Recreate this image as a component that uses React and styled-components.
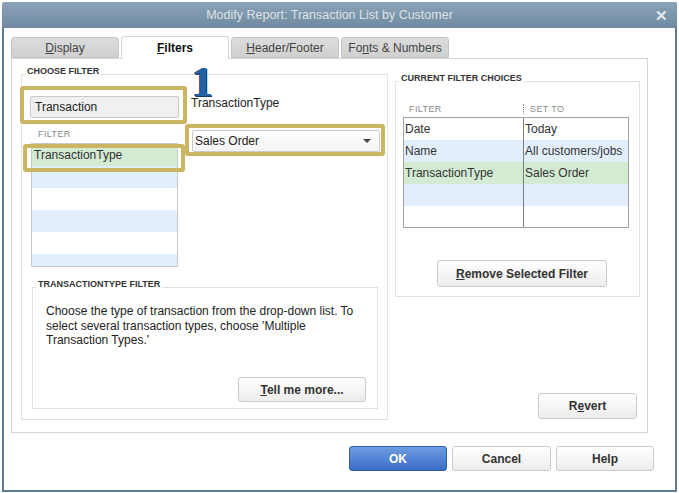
import React from 'react';
import styled, { createGlobalStyle } from 'styled-components';

const GlobalStyle = createGlobalStyle`
    body {
        margin: 0;
        background: #ffffff;
        font-family: "Liberation Sans", Arial, sans-serif;
        font-size: 12px;
        color: #222;
    }
`;

const Window = styled.div`
    box-sizing: border-box;
    margin: 2px 0 0 2px;
    width: 675px;
    height: 490px;
    border: 2px solid #5e7b92;
    border-top: none;
    border-radius: 3px 3px 0 0;
    background: #ffffff;
    display: flex;
    flex-direction: column;
`;

const TitleBar = styled.div`
    height: 26px;
    margin: 0 -2px;
    border-radius: 3px 3px 0 0;
    background: linear-gradient(#8ba3b7, #6f8aa1);
    display: flex;
    align-items: center;
    position: relative;
`;

const Title = styled.div`
    flex: 1;
    text-align: center;
    padding-right: 20px;
    color: #dde2e7;
    font-size: 12.5px;
`;

const CloseGlyph = styled.div`
    position: absolute;
    right: 9px;
    top: 5px;
    color: #e6e9ec;
    font-size: 15px;
    font-weight: bold;
`;

const Body = styled.div`
    flex: 1;
    padding: 8px 0 0 7px;
`;

const TabRow = styled.div`
    display: flex;
    gap: 2px;
    align-items: flex-end;
    height: 22px;
    position: relative;
    z-index: 1;
`;

const Tab = styled.div`
    box-sizing: border-box;
    width: 108px;
    height: ${p => (p.$active ? '23px' : '21px')};
    margin-bottom: ${p => (p.$active ? '-1px' : '0')};
    border: 1px solid ${p => (p.$active ? '#d4d4d4' : '#c6c6c6')};
    border-bottom: ${p => (p.$active ? 'none' : '1px solid #c6c6c6')};
    border-radius: 3px 3px 0 0;
    background: ${p => (p.$active ? '#ffffff' : 'linear-gradient(#dcdcdc, #d0d0d0)')};
    color: ${p => (p.$active ? '#111' : '#444')};
    font-weight: ${p => (p.$active ? 'bold' : 'normal')};
    font-size: 12px;
    display: flex;
    align-items: center;
    justify-content: center;
`;

const Mn = styled.span`
    text-decoration: underline;
`;

const Panel = styled.div`
    box-sizing: border-box;
    width: 637px;
    height: 375px;
    border: 1px solid #d6d6d6;
    padding: 15px 0 0 9px;
    display: flex;
    gap: 7px;
    align-items: flex-start;
    position: relative;
`;

const Group = styled.div`
    box-sizing: border-box;
    position: relative;
    width: ${p => p.$w}px;
    height: ${p => p.$h}px;
    border: 1px solid #e2e2e2;
    display: flex;
    flex-direction: column;
`;

const InnerGroup = styled(Group)`
    margin: 20px 0 0 10px;
`;

const GroupLabel = styled.span`
    position: absolute;
    top: -9px;
    left: 3px;
    padding: 0 2px;
    background: #ffffff;
    font-size: 9px;
    line-height: 11px;
    font-weight: bold;
    color: #333;
`;

const ChooseTop = styled.div`
    display: flex;
    padding: 21px 0 0 8px;
`;

const LeftCol = styled.div`
    width: 149px;
    display: flex;
    flex-direction: column;
`;

const SearchBox = styled.div`
    box-sizing: border-box;
    height: 22px;
    border: 1px solid #c9c9c9;
    border-radius: 2px;
    background: #f0f0f0;
    padding-left: 4px;
    display: flex;
    align-items: center;
    font-size: 12px;
    color: #222;
`;

const ColHead = styled.div`
    height: 14px;
    margin-top: 11px;
    padding-left: ${p => p.$pad || 0}px;
    font-size: 9px;
    letter-spacing: 0.4px;
    color: #8a8a8a;
    line-height: 10px;
`;

const ListBox = styled.div`
    box-sizing: border-box;
    margin-left: 1px;
    width: 147px;
    height: 124px;
    border: 1px solid #c8c8c8;
    overflow: hidden;
`;

const Row = styled.div`
    height: 22px;
    display: flex;
    align-items: center;
    background: ${p => (p.$tone === 'green' ? '#d3ebd3' : p.$tone === 'blue' ? '#e3eefc' : '#ffffff')};
    padding-left: ${p => (p.$cells ? 0 : 2)}px;
    font-size: 12px;
    color: #333;
`;

const RightCol = styled.div`
    margin-left: 12px;
    display: flex;
    flex-direction: column;
`;

const FieldName = styled.div`
    height: 14px;
    line-height: 14px;
    font-size: 12px;
    color: #222;
`;

const Dropdown = styled.div`
    box-sizing: border-box;
    margin: 20px 0 0 1px;
    width: 188px;
    height: 22px;
    border: 1px solid #cacaca;
    border-radius: 2px;
    background: linear-gradient(#ffffff, #f3f3f3);
    display: flex;
    align-items: center;
    justify-content: space-between;
    padding: 0 8px 0 2px;
    font-size: 12px;
    color: #222;
`;

const Caret = styled.span`
    width: 0;
    height: 0;
    border-left: 4px solid transparent;
    border-right: 4px solid transparent;
    border-top: 4px solid #444;
`;

const HelpText = styled.p`
    margin: 16px 0 0 13px;
    width: 312px;
    font-size: 12px;
    line-height: 14.5px;
    color: #222;
`;

const Button = styled.button`
    box-sizing: border-box;
    width: ${p => p.$w}px;
    height: ${p => p.$h || 25}px;
    border: 1px solid ${p => (p.$primary ? '#2f5ea8' : '#cbcbcb')};
    border-radius: 3px;
    background: ${p => (p.$primary ? 'linear-gradient(#6d9ce0, #3c6dc7)' : 'linear-gradient(#ffffff, #ececec)')};
    color: ${p => (p.$primary ? '#ffffff' : '#333')};
    font-family: "Liberation Sans", Arial, sans-serif;
    font-size: 12px;
    font-weight: bold;
    padding: 0;
    cursor: pointer;
`;

const TellButton = styled(Button)`
    margin: auto 11px 6px auto;
`;

const RightStack = styled.div`
    display: flex;
    flex-direction: column;
    margin-top: 7px;
`;

const TableHead = styled.div`
    display: flex;
    margin: 19px 0 0 7px;
    height: 16px;
    align-items: center;
`;

const HeadCell = styled.div`
    width: ${p => p.$w}px;
    padding-left: 6px;
    box-sizing: border-box;
    font-size: 9px;
    letter-spacing: 0.4px;
    color: #8a8a8a;
    border-left: ${p => (p.$sep ? '1px dotted #888' : 'none')};
    line-height: 10px;
`;

const Table = styled.div`
    box-sizing: border-box;
    margin-left: 7px;
    width: 226px;
    height: 111px;
    border: 1px solid #a3a3a3;
    overflow: hidden;
`;

const Cell = styled.div`
    box-sizing: border-box;
    width: ${p => p.$w}px;
    height: 22px;
    display: flex;
    align-items: center;
    padding-left: 1px;
    border-right: ${p => (p.$divider ? '1px solid #7d7d7d' : 'none')};
`;

const RemoveButton = styled(Button)`
    margin: 32px 0 0 41px;
`;

const RevertButton = styled(Button)`
    margin: 96px 3px 0 auto;
`;

const Footer = styled.div`
    display: flex;
    justify-content: flex-end;
    gap: 5px;
    margin-top: 13px;
    padding-right: 21px;
`;

// tutorial annotation boxes drawn over the dialog
const Highlight = styled.div`
    position: absolute;
    box-sizing: border-box;
    left: ${p => p.$x}px;
    top: ${p => p.$y}px;
    width: ${p => p.$w}px;
    height: ${p => p.$h}px;
    border: 4px solid #ccb562;
    border-radius: 3px;
    pointer-events: none;
`;

const StepNumber = styled.div`
    position: absolute;
    left: 180px;
    top: 2px;
    font-family: "Liberation Serif", "Times New Roman", serif;
    font-weight: bold;
    font-size: 42px;
    line-height: 1;
    color: #2263a6;
    text-shadow: -1px 0 0 #0f3b66, 1px 1px 0 #0f3b66, 0 1px 0 #0f3b66;
`;

const filterRows = ['green', 'blue', 'white', 'blue', 'white', 'blue'];

const choices = [
    { name: 'Date', value: 'Today', tone: 'white' },
    { name: 'Name', value: 'All customers/jobs', tone: 'blue' },
    { name: 'TransactionType', value: 'Sales Order', tone: 'green' },
    { name: '', value: '', tone: 'blue' },
    { name: '', value: '', tone: 'white' },
];

const App = () => {
    return (
        <>
            <GlobalStyle />
            <Window>
                <TitleBar>
                    <Title>Modify Report: Transaction List by Customer</Title>
                    <CloseGlyph>✕</CloseGlyph>
                </TitleBar>
                <Body>
                    <TabRow>
                        <Tab><Mn>D</Mn>isplay</Tab>
                        <Tab $active><Mn>F</Mn>ilters</Tab>
                        <Tab><Mn>H</Mn>eader/Footer</Tab>
                        <Tab>Fo<Mn>n</Mn>ts &amp; Numbers</Tab>
                    </TabRow>
                    <Panel>
                        <Group $w={367} $h={346}>
                            <GroupLabel>CHOOSE FILTER</GroupLabel>
                            <ChooseTop>
                                <LeftCol>
                                    <SearchBox>Transaction</SearchBox>
                                    <ColHead $pad={8}>FILTER</ColHead>
                                    <ListBox>
                                        {filterRows.map((tone, i) => (
                                            <Row key={i} $tone={tone}>{i === 0 ? 'TransactionType' : ''}</Row>
                                        ))}
                                    </ListBox>
                                </LeftCol>
                                <RightCol>
                                    <FieldName>TransactionType</FieldName>
                                    <Dropdown>
                                        Sales Order
                                        <Caret />
                                    </Dropdown>
                                </RightCol>
                            </ChooseTop>
                            <InnerGroup $w={346} $h={122}>
                                <GroupLabel>TRANSACTIONTYPE FILTER</GroupLabel>
                                <HelpText>
                                    Choose the type of transaction from the drop-down list. To select several
                                    transaction types, choose 'Multiple Transaction Types.'
                                </HelpText>
                                <TellButton $w={128}><Mn>T</Mn>ell me more...</TellButton>
                            </InnerGroup>
                        </Group>
                        <RightStack>
                            <Group $w={245} $h={216}>
                                <GroupLabel>CURRENT FILTER CHOICES</GroupLabel>
                                <TableHead>
                                    <HeadCell $w={120}>FILTER</HeadCell>
                                    <HeadCell $w={104} $sep>SET TO</HeadCell>
                                </TableHead>
                                <Table>
                                    {choices.map((c, i) => (
                                        <Row key={i} $tone={c.tone} $cells>
                                            <Cell $w={120} $divider>{c.name}</Cell>
                                            <Cell $w={104}>{c.value}</Cell>
                                        </Row>
                                    ))}
                                </Table>
                                <RemoveButton $w={170} $h={27}><Mn>R</Mn>emove Selected Filter</RemoveButton>
                            </Group>
                            <RevertButton $w={99} $h={26}>R<Mn>e</Mn>vert</RevertButton>
                        </RightStack>

                        <Highlight $x={8} $y={27} $w={167} $h={38} />
                        <Highlight $x={11} $y={85} $w={162} $h={28} />
                        <Highlight $x={173} $y={65} $w={200} $h={32} />
                        <StepNumber>1</StepNumber>
                    </Panel>
                    <Footer>
                        <Button $primary $w={98}>OK</Button>
                        <Button $w={99}>Cancel</Button>
                        <Button $w={98}>Help</Button>
                    </Footer>
                </Body>
            </Window>
        </>
    );
};

export default App;
